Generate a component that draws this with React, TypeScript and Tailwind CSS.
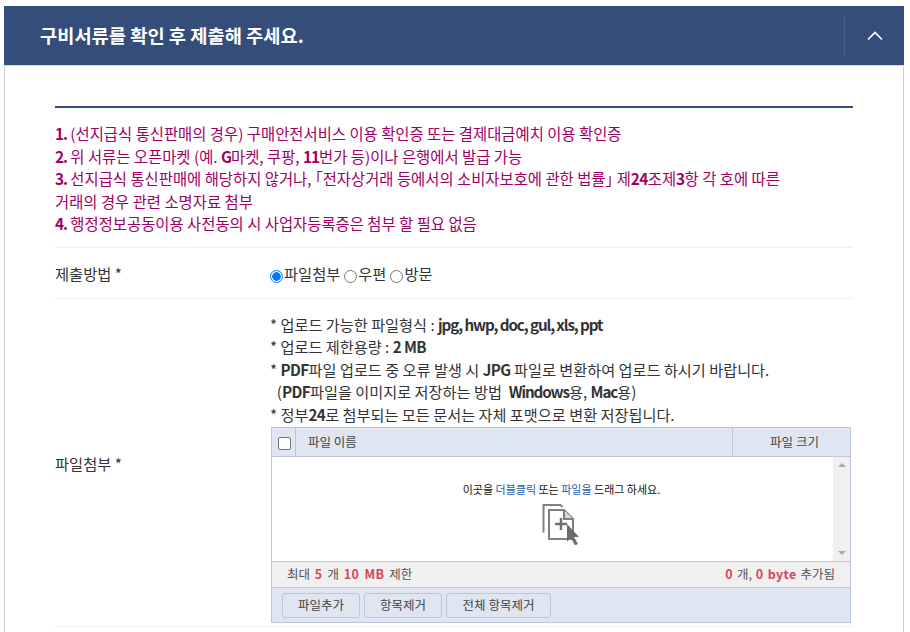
import React from 'react';

const font = { fontFamily: '"Noto Sans CJK KR", sans-serif' };

function B({ children }: { children: React.ReactNode }) {
  return <span className="font-bold tracking-[-0.6px]">{children}</span>;
}

// latin runs that sit tighter in the reference
function T({ children }: { children: React.ReactNode }) {
  return <span className="font-bold tracking-[-1.1px]">{children}</span>;
}

function Red({ children }: { children: React.ReactNode }) {
  return <span className="font-bold text-[#d9455f] tracking-[0.4px]">{children}</span>;
}

function Radio({ checked }: { checked?: boolean }) {
  return (
    <span
      className={`inline-block w-[13px] h-[13px] rounded-full border shrink-0 mt-[5px] ${
        checked ? 'border-[#0075ff] bg-[radial-gradient(circle,#0075ff_0,#0075ff_4px,#fff_4.6px)]' : 'border-[#767676] bg-white'
      }`}
    />
  );
}

function DropIcon() {
  return (
    <svg width="38" height="42" viewBox="0 0 38 42" fill="none">
      <path d="M1.5 29.5V2h17l2 2" stroke="#808080" stroke-width="2" />
      <path d="M7 36V7h15l9 9v20H7z" fill="#fff" stroke="#808080" stroke-width="2" />
      <path d="M22 7v9h9" fill="#d8d8d8" stroke="#808080" stroke-width="2" />
      <path d="M19 15v12M13 21h12" stroke="#707070" stroke-width="2.5" />
      <path d="M25 21l12 13-5 0 4 7-3 1.5-4-7.5-4 3.5z" fill="#6b6b6b" />
    </svg>
  );
}

export default function App() {
  return (
    <div className="w-[910px] h-[632px] overflow-hidden bg-white pt-[6px] pl-[4px]" style={font}>
      <div className="w-[900px] h-[700px] border-x border-[#ccc] relative">
        <div className="-mx-px h-[59px] bg-[#344d7a] flex items-center justify-between">
          <h2 className="ml-[36px] text-[18.7px] font-bold text-white leading-none">구비서류를 확인 후 제출해 주세요.</h2>
          <div className="h-[40px] w-[60px] border-l border-[#4a6088] flex items-center justify-center">
            <svg width="16" height="10" viewBox="0 0 16 10" fill="none">
              <path d="M1 8.5L8 1.5l7 7" stroke="#fff" stroke-width="1.6" />
            </svg>
          </div>
        </div>
        <div className="border-t border-[#d5d9e2] ml-[-1px] mr-[-1px]" />
        <div className="mx-[50px] pt-[40px]">
          <div className="border-t-2 border-[#344d7a]" />
          <div className="pt-[14px] pb-[12px] text-[15.4px] leading-[22.5px] text-[#a00063] border-b border-[#eeeeee]">
            <p><T>1.</T> (선지급식 통신판매의 경우) 구매안전서비스 이용 확인증 또는 결제대금예치 이용 확인증</p>
            <p><T>2.</T> 위 서류는 오픈마켓 (예. <T>G</T>마켓, 쿠팡, <T>11</T>번가 등)이나 은행에서 발급 가능</p>
            <p><T>3.</T> 선지급식 통신판매에 해당하지 않거나, <span className="[font-feature-settings:'palt']">「</span>전자상거래 등에서의 소비자보호에 관한 법률<span className="[font-feature-settings:'palt']">」</span> 제<B>24</B>조제<B>3</B>항 각 호에 따른</p>
            <p>거래의 경우 관련 소명자료 첨부</p>
            <p><T>4.</T> 행정정보공동이용 사전동의 시 사업자등록증은 첨부 할 필요 없음</p>
          </div>
          <div className="flex h-[51px] items-center border-b border-[#eeeeee] text-[15.3px] text-[#333] pt-[2px]">
            <div className="w-[215px]">제출방법 *</div>
            <div className="flex items-center gap-[1px]">
              <Radio checked />
              <span className="mr-[3px]">파일첨부</span>
              <Radio />
              <span className="mr-[3px]">우편</span>
              <Radio />
              <span>방문</span>
            </div>
          </div>
          <div className="flex border-b border-[#eeeeee] text-[#333] pb-[3px]">
            <div className="w-[215px] shrink-0 text-[15.3px] pt-[153px]">파일첨부 *</div>
            <div className="w-[581px]">
              <div className="pt-[14px] text-[15.2px] leading-[22.5px] text-[#333]">
                <p>* 업로드 가능한 파일형식 : <T>jpg, hwp, doc, gul, xls, ppt</T></p>
                <p>* 업로드 제한용량 : <B>2 MB</B></p>
                <p>* <B>PDF</B>파일 업로드 중 오류 발생 시 <B>JPG</B> 파일로 변환하여 업로드 하시기 바랍니다.</p>
                <p>&nbsp;&nbsp;(<B>PDF</B>파일을 이미지로 저장하는 방법 &nbsp;<T>Windows</T>용, <T>Mac</T>용)</p>
                <p>* 정부<B>24</B>로 첨부되는 모든 문서는 자체 포맷으로 변환 저장됩니다.</p>
              </div>
              <div className="mt-[2px] ml-[1px] w-[580px] border border-[#bcc6d8] text-[12.5px]">
                <div className="flex h-[29px] bg-[#dfe6f1] border-b border-[#bcc6d8] text-[#444]">
                  <div className="w-[24px] border-r border-[#bcc6d8] flex items-center justify-center pl-[1px]">
                    <span className="w-[13px] h-[13px] mt-[3px] rounded-[2px] border border-[#767676] bg-white" />
                  </div>
                  <div className="flex-1 flex items-center pl-[12px]">파일 이름</div>
                  <div className="w-[118px] border-l border-[#bcc6d8] flex items-center justify-center pl-[6px]">파일 크기</div>
                </div>
                <div className="flex h-[104px]">
                  <div className="flex-1 flex flex-col items-center pt-[25px] pl-[18px] text-[#111]">
                    <p className="leading-[14px] text-[11px]">이곳을 <span className="text-[#1b5aa5]">더블클릭</span> 또는 <span className="text-[#1b5aa5]">파일을</span> 드래그 하세요.</p>
                    <div className="mt-[7px] ml-[-2px]"><DropIcon /></div>
                  </div>
                  <div className="w-[17px] bg-[#f0f0f0] flex flex-col items-center justify-between py-[6px]">
                    <span className="w-0 h-0 border-x-[4px] border-x-transparent border-b-[4px] border-b-[#a8a8a8]" />
                    <span className="w-0 h-0 border-x-[4px] border-x-transparent border-t-[4px] border-t-[#a8a8a8]" />
                  </div>
                </div>
                <div className="flex h-[27px] items-center justify-between bg-[#f0f0f0] border-y border-[#bcc6d8] px-[15px] text-[#555] [word-spacing:2px]">
                  <span>최대 <Red>5</Red> 개 <Red>10 MB</Red> 제한</span>
                  <span className="[word-spacing:1px]"><Red>0</Red> 개, <Red>0 byte</Red> 추가됨</span>
                </div>
                <div className="flex h-[34px] items-center gap-[4px] bg-[#dfe6f1] px-[10px] text-[#444]">
                  <button className="h-[25px] w-[78px] rounded-[3px] border border-[#bcc6d8]">파일추가</button>
                  <button className="h-[25px] w-[78px] rounded-[3px] border border-[#bcc6d8]">항목제거</button>
                  <button className="h-[25px] w-[105px] rounded-[3px] border border-[#bcc6d8]">전체 항목제거</button>
                </div>
              </div>
            </div>
          </div>
        </div>
      </div>
    </div>
  );
}
